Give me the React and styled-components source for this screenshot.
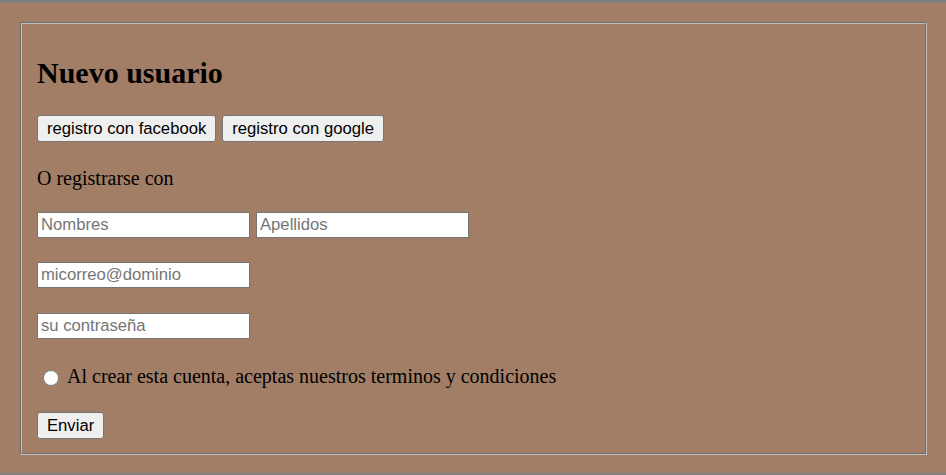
import React from 'react';
import styled, { createGlobalStyle } from 'styled-components';

const GlobalStyle = createGlobalStyle`
  html,
  body {
    margin: 0;
    background-color: #808080;
  }

  body {
    font-family: 'Liberation Serif', 'Times New Roman', serif;
    font-size: 20px;
    color: #000;
  }
`;

const Page = styled.div`
  margin-top: 3px;
  padding: 19px 19px 18px 20px;
  background-color: #a27e66;
`;

const Box = styled.fieldset`
  margin: 0;
  padding: 7px 15px 14px;
  border: 2px groove #c0c0c0;
  min-width: 0;
`;

const Title = styled.h2`
  margin: 25px 0 0;
  font-size: 30px;
  line-height: 34px;
  font-weight: bold;
`;

const Row = styled.div`
  display: flex;
  align-items: center;
  gap: 6px;
  margin-top: ${({ $top }) => $top}px;
`;

const Button = styled.button`
  height: 27px;
  padding: 0 9px;
  border: 1px solid #767676;
  border-radius: 3px;
  background-color: #efefef;
  font-family: 'Liberation Sans', Arial, sans-serif;
  font-size: 16.67px;
  color: #000;
  cursor: pointer;
`;

const Text = styled.p`
  margin: ${({ $top }) => $top}px 0 0;
  line-height: 23px;
`;

const Field = styled.input`
  box-sizing: border-box;
  width: 213px;
  height: 26px;
  padding: 0 3px;
  border: 1px solid #767676;
  border-radius: 0;
  background-color: #fff;
  font-family: 'Liberation Sans', Arial, sans-serif;
  font-size: 16.67px;
  color: #000;

  &::placeholder {
    color: #757575;
  }
`;

const Terms = styled.label`
  display: flex;
  align-items: center;
  margin-top: 26px;
  line-height: 23px;
`;

const Radio = styled.input`
  width: 16px;
  height: 16px;
  margin: 2px 8px 0 6px;
`;

export default function App() {
  return (
    <>
      <GlobalStyle />
      <Page>
        <Box>
          <Title>Nuevo usuario</Title>
          <Row $top={25}>
            <Button type="button">registro con facebook</Button>
            <Button type="button">registro con google</Button>
          </Row>
          <Text $top={25}>O registrarse con</Text>
          <Row $top={22}>
            <Field type="text" placeholder="Nombres" />
            <Field type="text" placeholder="Apellidos" />
          </Row>
          <Row $top={24}>
            <Field type="email" placeholder="micorreo@dominio" />
          </Row>
          <Row $top={25}>
            <Field type="password" placeholder="su contraseña" />
          </Row>
          <Terms>
            <Radio type="radio" name="terms" />
            Al crear esta cuenta, aceptas nuestros terminos y condiciones
          </Terms>
          <Row $top={24}>
            <Button type="submit">Enviar</Button>
          </Row>
        </Box>
      </Page>
    </>
  );
}
